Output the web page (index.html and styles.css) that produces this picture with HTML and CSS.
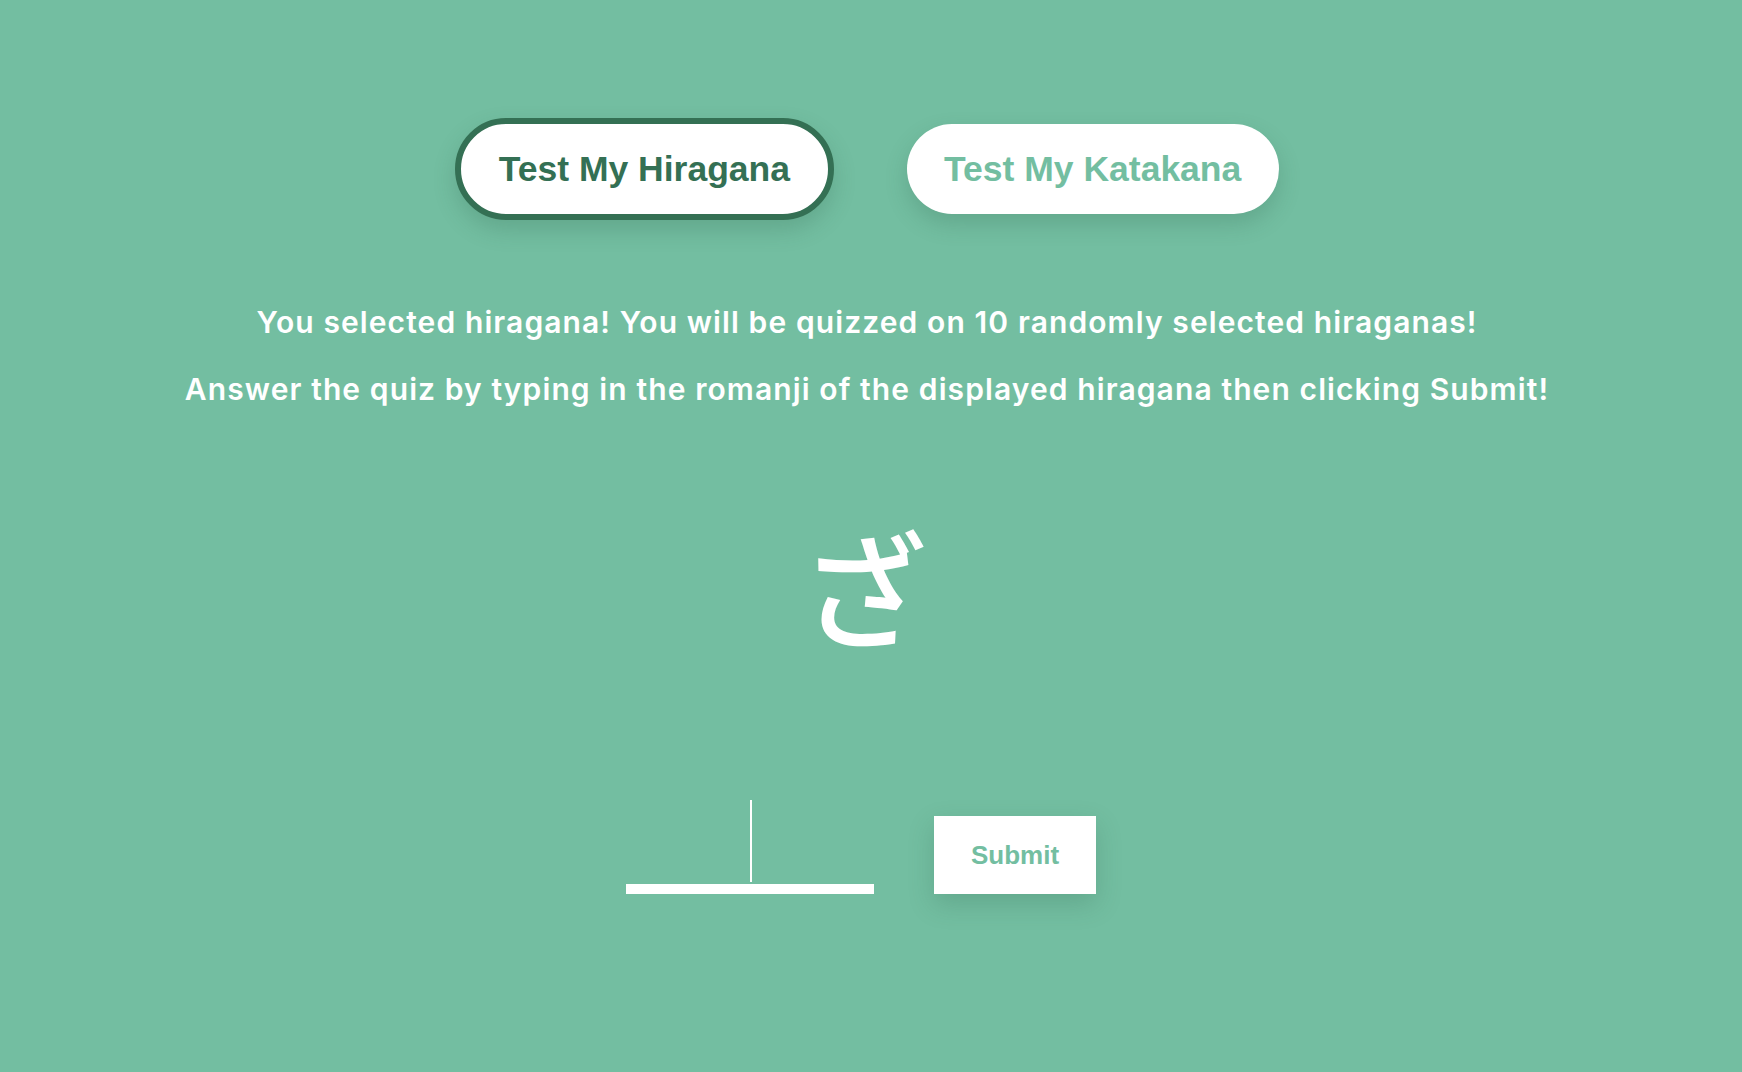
FILE: index.html
```html
<!DOCTYPE html>
<html lang="en">
<head>
<meta charset="utf-8">
<title>Kana Quiz</title>
<link rel="stylesheet" href="styles.css">
</head>
<body>
<main class="page">
  <div class="modes">
    <button class="mode-btn active">Test My Hiragana</button>
    <button class="mode-btn">Test My Katakana</button>
  </div>
  <div class="instructions">
    <p class="line">You selected hiragana! You will be quizzed on 10 randomly selected hiraganas!</p>
    <p class="line">Answer the quiz by typing in the romanji of the displayed hiragana then clicking Submit!</p>
  </div>
  <div class="kana" lang="ja">ざ</div>
  <form class="answer-row" onsubmit="return false;">
    <div class="answer-field">
      <input class="answer-input" type="text" aria-label="Answer">
      <span class="caret"></span>
    </div>
    <button class="submit-btn" type="submit">Submit</button>
  </form>
</main>
</body>
</html>
```

FILE: styles.css
```css
html, body {
  margin: 0;
  padding: 0;
  background: #73bea1;
}

body {
  width: 1742px;
  height: 1072px;
  overflow: hidden;
}

.page {
  box-sizing: border-box;
  width: 1734px;
  padding-top: 118px;
  display: flex;
  flex-direction: column;
  align-items: center;
}

.modes {
  display: flex;
  align-items: center;
  gap: 73px;
}

.mode-btn {
  font-family: "Liberation Sans", Arial, sans-serif;
  font-weight: 700;
  font-size: 35.5px;
  line-height: 41px;
  padding: 24.5px 37.5px;
  border: none;
  border-radius: 999px;
  background: #ffffff;
  color: #73bea1;
  box-shadow: 0 10px 22px rgba(40, 90, 70, 0.22);
  cursor: pointer;
}

.mode-btn.active {
  border: 6px solid #347054;
  color: #347054;
}

.instructions {
  margin-top: 84px;
  display: flex;
  flex-direction: column;
  align-items: center;
  gap: 31px;
}

.line {
  margin: 0;
  font-family: Inter, "Noto Sans", sans-serif;
  font-weight: 600;
  font-size: 30px;
  line-height: 36px;
  letter-spacing: 1.1px;
  color: #ffffff;
  white-space: nowrap;
}

.kana {
  margin: 114px 6px 0 0;
  font-family: "Noto Sans CJK JP", sans-serif;
  font-weight: 500;
  font-size: 126px;
  line-height: 126px;
  color: #ffffff;
}

.answer-row {
  margin: 153px 0 0 -12px;
  display: flex;
  align-items: flex-end;
  gap: 60px;
}

.answer-field {
  position: relative;
  width: 248px;
  height: 94px;
}

.answer-input {
  box-sizing: border-box;
  width: 248px;
  height: 94px;
  padding: 0;
  border: none;
  border-bottom: 10px solid #ffffff;
  background: transparent;
  color: #ffffff;
  font-family: "Liberation Sans", Arial, sans-serif;
  font-size: 64px;
  text-align: center;
  outline: none;
  caret-color: transparent;
}

.caret {
  position: absolute;
  left: 124px;
  top: 0;
  width: 2px;
  height: 82px;
  background: #ffffff;
}

.submit-btn {
  width: 162px;
  height: 78px;
  padding: 0;
  border: none;
  background: #ffffff;
  color: #73bea1;
  font-family: "Liberation Sans", Arial, sans-serif;
  font-weight: 700;
  font-size: 26px;
  box-shadow: 0 10px 24px rgba(40, 90, 70, 0.22);
  cursor: pointer;
}
```
